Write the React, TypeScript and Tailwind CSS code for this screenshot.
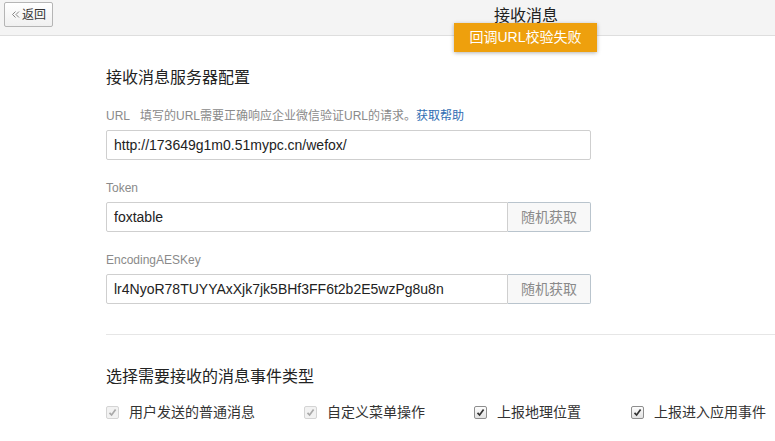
import React from "react";

const font = { fontFamily: '"Liberation Sans", "Noto Sans CJK SC", sans-serif' };

function Field({ label, value, withButton }: { label: React.ReactNode; value: string; withButton?: boolean }) {
  return (
    <div>
      <div className="text-[12px] leading-[16px] text-[#8a8a8a]">{label}</div>
      <div className="mt-[6px] flex h-[30px] w-[485px]">
        <div
          className={
            "flex flex-1 items-center border border-[#cfcfcf] pl-[7px] text-[14px] text-[#222] " +
            (withButton ? "rounded-l-[2px]" : "rounded-[2px]")
          }
        >
          {value}
        </div>
        {withButton ? (
          <button className="w-[83px] rounded-r-[2px] border border-l-0 border-[#b9c4cd] bg-[#f8f8f8] text-[14px] text-[#8a8a8a]">
            随机获取
          </button>
        ) : null}
      </div>
    </div>
  );
}

function Check({ label, disabled }: { label: string; disabled?: boolean }) {
  return (
    <div className="flex items-center">
      <span
        className={
          "flex h-[13px] w-[13px] items-center justify-center rounded-[2px] border " +
          (disabled ? "border-[#d4d4d4] bg-[#f2f2f2]" : "border-[#8e8e8e] bg-gradient-to-b from-[#fdfdfd] to-[#e2e2e2]")
        }
      >
        <svg width="9" height="9" viewBox="0 0 9 9">
          <path
            d="M1.5 4.8 L3.6 7 L7.6 1.6"
            fill="none"
            stroke={disabled ? "#a9a9a9" : "#333"}
            strokeWidth="1.7"
          />
        </svg>
      </span>
      <span className="ml-[10px] text-[14px] text-[#333]">{label}</span>
    </div>
  );
}

export default function App() {
  return (
    <div className="relative h-[441px] w-[775px] overflow-hidden bg-white" style={font}>
      {/* 顶部栏 */}
      <div className="flex h-[36px] items-start border-b border-[#dedede] bg-[#f4f4f4] pl-[4px] pt-[2px]">
        <button className="flex h-[25px] w-[49px] items-center justify-center rounded-[2px] border border-[#b5b5b5] bg-gradient-to-b from-white to-[#f0f0f0] text-[12px] text-[#333]">
          <svg width="9" height="9" viewBox="0 0 9 9" className="mr-[2px]">
            <path d="M4.5 1.5 L1.5 4.5 L4.5 7.5 M8 1.5 L5 4.5 L8 7.5" fill="none" stroke="#777" strokeWidth="0.9" />
          </svg>
          返回
        </button>
        <div className="ml-[441px] mt-[4px] text-[16px] leading-[20px] text-[#222]">接收消息</div>
      </div>

      {/* 提示 */}
      <div className="absolute left-[454px] top-[23px] flex h-[29px] w-[143px] items-center justify-center bg-[#eea00d] text-[14px] text-white shadow-[0_1px_4px_rgba(0,0,0,0.3)]">
        回调URL校验失败
      </div>

      <div className="pl-[106px]">
        <div className="mt-[32px] text-[16px] leading-[20px] text-[#222]">接收消息服务器配置</div>

        <div className="mt-[20px] flex flex-col gap-[20px]">
          <Field
            label={
              <>
                URL&nbsp;&nbsp;&nbsp;填写的URL需要正确响应企业微信验证URL的请求。
                <span className="text-[#2f6db2]">获取帮助</span>
              </>
            }
            value="http://173649g1m0.51mypc.cn/wefox/"
          />
          <Field label="Token" value="foxtable" withButton />
          <Field label="EncodingAESKey" value="lr4NyoR78TUYYAxXjk7jk5BHf3FF6t2b2E5wzPg8u8n" withButton />
        </div>

        <div className="mt-[30px] border-t border-[#e6e6e6]" />

        <div className="mt-[32px] text-[16px] leading-[20px] text-[#222]">选择需要接收的消息事件类型</div>

        <div className="mt-[15px] flex">
          <div className="w-[198px]">
            <Check label="用户发送的普通消息" disabled />
          </div>
          <div className="w-[170px]">
            <Check label="自定义菜单操作" disabled />
          </div>
          <div className="w-[157px]">
            <Check label="上报地理位置" />
          </div>
          <div>
            <Check label="上报进入应用事件" />
          </div>
        </div>
      </div>
    </div>
  );
}
